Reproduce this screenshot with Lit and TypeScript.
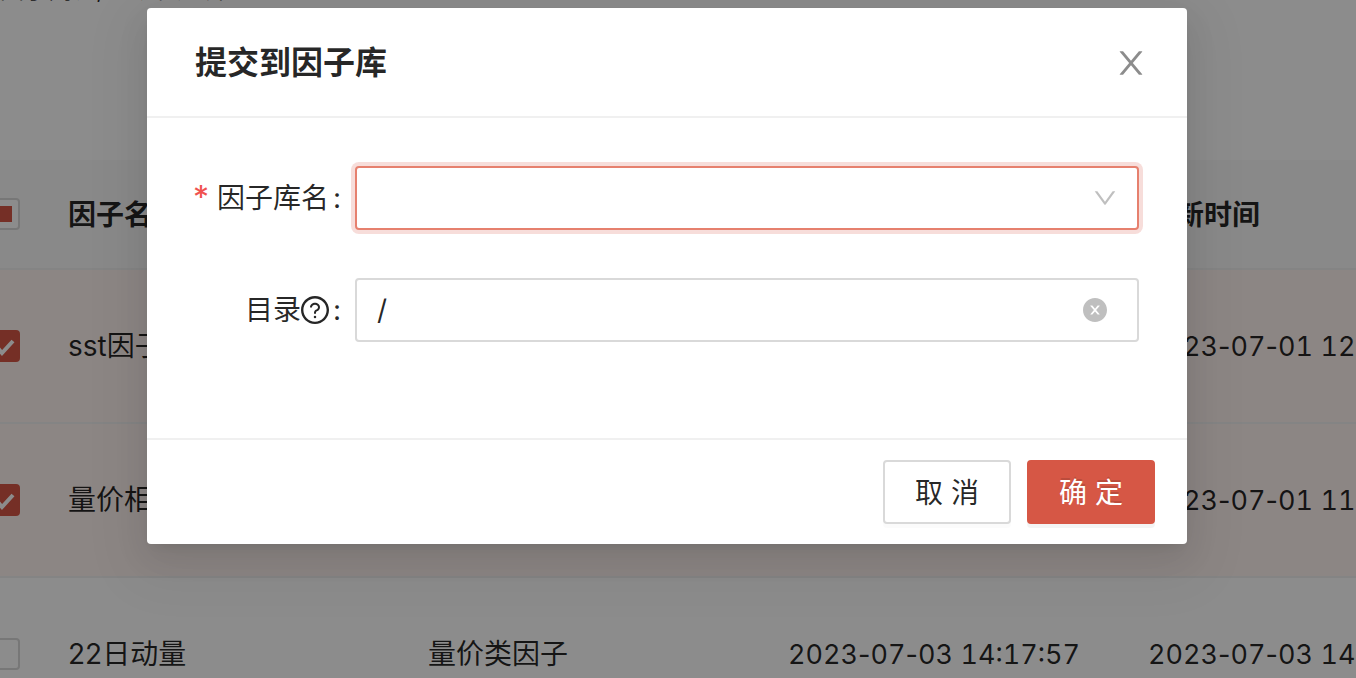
import { LitElement, html, css, svg } from "lit";
import { customElement, state } from "lit/decorators.js";

interface Row {
  name: string;
  type: string;
  created: string;
  updated: string;
  checked: boolean;
}

const ROWS: Row[] = [
  { name: "sst因子", type: "量价类因子", created: "2023-07-01 12:20:41", updated: "2023-07-01 12:20:41", checked: true },
  { name: "量价相关性", type: "量价类因子", created: "2023-07-01 11:42:16", updated: "2023-07-01 11:42:16", checked: true },
  { name: "22日动量", type: "量价类因子", created: "2023-07-03 14:17:57", updated: "2023-07-03 14:17:57", checked: false },
];

const closePath = svg`<path d="M563.8 512l262.5-312.9c4.4-5.2.7-13.1-6.1-13.1h-79.8c-4.7 0-9.2 2.1-12.3 5.7L511.6 449.8 295.1 191.7c-3-3.6-7.5-5.7-12.3-5.7H203c-6.8 0-10.5 7.9-6.1 13.1L459.4 512 196.9 824.9A7.95 7.95 0 00203 838h79.8c4.7 0 9.2-2.1 12.3-5.7l216.5-258.1 216.5 258.1c3 3.6 7.5 5.7 12.3 5.7h79.8c6.8 0 10.5-7.9 6.1-13.1L563.8 512z"></path>`;
const downPath = svg`<path d="M884 256h-75c-5.1 0-9.9 2.5-12.9 6.6L512 654.2 227.9 262.6c-3-4.1-7.8-6.6-12.9-6.6h-75c-6.5 0-10.3 7.4-6.5 12.7l352.6 486.1c12.8 17.6 39 17.6 51.7 0l352.6-486.1c3.9-5.3.1-12.7-6.4-12.7z"></path>`;
const questionPath = svg`<path d="M512 64C264.6 64 64 264.6 64 512s200.6 448 448 448 448-200.6 448-448S759.4 64 512 64zm0 820c-205.4 0-372-166.6-372-372s166.6-372 372-372 372 166.6 372 372-166.600 372-372 372z"></path><path d="M623.6 316.7C593.600 290.400 554 276 512 276s-81.600 14.500-111.600 40.700C369.200 344 352 380.700 352 420v7.600c0 4.400 3.600 8 8 8h48c4.400 0 8-3.600 8-8V420c0-44.100 43.100-80 96-80s96 35.900 96 80c0 31.100-22 59.600-56.100 72.700-21.200 8.100-39.200 22.300-52.100 40.900-13.100 19-19.900 41.800-19.900 64.900V620c0 4.400 3.600 8 8 8h48c4.400 0 8-3.600 8-8v-22.700a48.300 48.300 0 0130.900-44.800c59-22.700 97.100-74.700 97.100-132.500.1-39.300-17.100-76-48.300-103.300zM472 732a40 40 0 1080 0 40 40 0 10-80 0z"></path>`;
const clearPath = svg`<path d="M512 64C264.600 64 64 264.600 64 512s200.600 448 448 448 448-200.600 448-448S759.400 64 512 64zm165.400 618.200l-66-.3L512 563.400l-99.300 118.400-66.100.3c-4.400 0-8-3.500-8-8 0-1.900.7-3.700 1.900-5.200l130.100-155L340.500 359a8.320 8.320 0 01-1.900-5.200c0-4.400 3.600-8 8-8l66.100.3L512 464.600l99.300-118.400 66-.3c4.400 0 8 3.500 8 8 0 1.900-.7 3.700-1.900 5.200L553.500 514l130 155c1.200 1.500 1.900 3.300 1.900 5.200 0 4.400-3.600 8-8 8z"></path>`;

const icon = (paths: unknown, cls: string) =>
  html`<svg class="icon ${cls}" viewBox="64 64 896 896" aria-hidden="true">${paths}</svg>`;

// Tabular figures for the digit runs; hyphens and spaces keep their own widths.
const timestamp = (value: string) =>
  html`<time>${value.split(/([- ])/).map((part) => (/\d/.test(part) ? html`<span class="num">${part}</span>` : part))}</time>`;

const baseStyles = css`
  * {
    box-sizing: border-box;
  }
  .icon {
    display: block;
    fill: currentColor;
    flex: none;
  }
`;

@customElement("factor-table")
export class FactorTable extends LitElement {
  static styles = [
    baseStyles,
    css`
      :host {
        display: block;
      }
      .intro {
        margin: 0;
        height: 160px;
        overflow: hidden;
        display: flex;
        font-size: 24px;
      }
      .intro span {
        margin-top: -32px;
        white-space: nowrap;
      }
      table {
        width: 1504px;
        margin-left: -28px;
        table-layout: fixed;
        border-collapse: separate;
        border-spacing: 0;
      }
      .pick-col {
        width: 64px;
      }
      th,
      td {
        text-align: left;
        white-space: nowrap;
        border-bottom: 2px solid #f0f0f0;
      }
      th {
        font-weight: 600;
        padding: 33px 32px 31px;
        background: #fafafa;
      }
      td {
        height: 154px;
        padding: 0 32px;
      }
      .selected td {
        background: #fff4f0;
      }
      th.pick,
      td.pick {
        padding: 0 16px;
      }
      time {
        font-size: 27px;
      }
      .num {
        font-feature-settings: "tnum";
      }
      input {
        appearance: none;
        display: block;
        width: 32px;
        height: 32px;
        margin: 0;
        border: 2px solid #d9d9d9;
        border-radius: 4px;
        background: #fff center / 28px 28px no-repeat;
      }
      input:checked {
        border-color: #d65745;
        background-color: #d65745;
        background-image: url("data:image/svg+xml,%3Csvg xmlns='http://www.w3.org/2000/svg' viewBox='0 0 28 28'%3E%3Cpath d='M6 14l6 7L23 9' fill='none' stroke='white' stroke-width='4'/%3E%3C/svg%3E");
      }
      input:indeterminate {
        background-image: linear-gradient(#d65745, #d65745);
        background-size: 16px 16px;
      }
    `,
  ];

  render() {
    return html`
      <p class="intro"><span>因子列表, 可提交到库</span></p>
      <table>
        <colgroup>
          <col class="pick-col" />
          <col /><col /><col /><col />
        </colgroup>
        <thead>
          <tr>
            <th class="pick"><input type="checkbox" aria-label="全选" .indeterminate=${true} /></th>
            <th>因子名称</th>
            <th>因子类型</th>
            <th>创建时间</th>
            <th>更新时间</th>
          </tr>
        </thead>
        <tbody>
          ${ROWS.map(
            (r) => html`<tr class=${r.checked ? "selected" : ""}>
              <td class="pick"><input type="checkbox" aria-label=${r.name} .checked=${r.checked} /></td>
              <td>${r.name}</td>
              <td>${r.type}</td>
              <td>${timestamp(r.created)}</td>
              <td>${timestamp(r.updated)}</td>
            </tr>`
          )}
        </tbody>
      </table>
    `;
  }
}

@customElement("submit-dialog")
export class SubmitDialog extends LitElement {
  @state() private directory = "/";

  static styles = [
    baseStyles,
    css`
      :host {
        display: block;
        width: 100%;
        max-width: 1040px;
      }
      .dialog {
        background: #fff;
        border-radius: 4px;
        box-shadow: 0 6px 12px -8px rgba(0, 0, 0, 0.12), 0 12px 32px rgba(0, 0, 0, 0.08),
          0 18px 56px 16px rgba(0, 0, 0, 0.05);
      }
      header {
        display: flex;
        align-items: center;
        justify-content: space-between;
        padding: 33px 40px 31px 48px;
        border-bottom: 2px solid #f0f0f0;
      }
      h2 {
        margin: 0;
        font-size: 32px;
        line-height: 44px;
        font-weight: 600;
      }
      button {
        font: inherit;
        color: inherit;
        cursor: pointer;
      }
      .close,
      .clear {
        border: 0;
        padding: 0;
        background: none;
      }
      .close {
        color: rgba(0, 0, 0, 0.45);
      }
      .close .icon {
        width: 32px;
        height: 32px;
      }
      form {
        display: grid;
        gap: 48px;
        padding: 48px 48px 96px;
      }
      .field {
        display: grid;
        grid-template-columns: 160px 1fr;
        align-items: center;
      }
      label {
        display: flex;
        align-items: center;
        justify-content: flex-end;
        white-space: nowrap;
      }
      .required::before {
        content: "*";
        color: #f0524f;
        margin-right: 8px;
        font-size: 32px;
      }
      .colon {
        margin: 0 14px 0 4px;
      }
      .help {
        width: 28px;
        height: 28px;
      }
      .control {
        position: relative;
      }
      select,
      input {
        appearance: none;
        display: block;
        width: 100%;
        height: 64px;
        padding: 0 64px 0 20px;
        border: 2px solid #d9d9d9;
        border-radius: 4px;
        background: #fff;
        font: inherit;
        color: inherit;
        outline: 0;
      }
      select {
        border-color: #e6806e;
        box-shadow: 0 0 0 4px rgba(214, 87, 69, 0.2);
      }
      .arrow,
      .clear {
        position: absolute;
        top: 0;
        bottom: 0;
        margin: auto 0;
        color: rgba(0, 0, 0, 0.25);
      }
      .arrow {
        right: 22px;
        width: 24px;
        height: 24px;
        pointer-events: none;
      }
      .clear {
        right: 32px;
        height: 24px;
      }
      .clear .icon {
        width: 24px;
        height: 24px;
      }
      footer {
        display: flex;
        justify-content: flex-end;
        gap: 16px;
        padding: 20px 32px;
        border-top: 2px solid #f0f0f0;
      }
      .action {
        min-width: 128px;
        height: 64px;
        padding: 2px 28px 0;
        border: 2px solid #d9d9d9;
        border-radius: 4px;
        background: #fff;
        box-shadow: 0 4px 0 rgba(0, 0, 0, 0.016);
        line-height: 44px;
      }
      .primary {
        border-color: #d65745;
        background: #d65745;
        color: #fff;
        text-shadow: 0 -2px 0 rgba(0, 0, 0, 0.12);
        box-shadow: 0 4px 0 rgba(0, 0, 0, 0.043);
      }
    `,
  ];

  render() {
    return html`
      <section class="dialog" role="dialog" aria-modal="true" aria-labelledby="title">
        <header>
          <h2 id="title">提交到因子库</h2>
          <button class="close" type="button" aria-label="关闭">${icon(closePath, "")}</button>
        </header>
        <form @submit=${(e: Event) => e.preventDefault()}>
          <div class="field">
            <label class="required" for="library">因子库名<span class="colon">:</span></label>
            <div class="control">
              <select id="library" required><option value=""></option></select>
              ${icon(downPath, "arrow")}
            </div>
          </div>
          <div class="field">
            <label for="directory">目录${icon(questionPath, "help")}<span class="colon">:</span></label>
            <div class="control">
              <input
                id="directory"
                type="text"
                .value=${this.directory}
                @input=${(e: Event) => (this.directory = (e.target as HTMLInputElement).value)}
              />
              <button class="clear" type="button" aria-label="清除" @click=${() => (this.directory = "")}>
                ${icon(clearPath, "")}
              </button>
            </div>
          </div>
        </form>
        <footer>
          <button class="action" type="button">取 消</button>
          <button class="action primary" type="button">确 定</button>
        </footer>
      </section>
    `;
  }
}

@customElement("app-root")
export class AppRoot extends LitElement {
  static styles = [
    baseStyles,
    css`
      :host {
        display: block;
        position: relative;
        height: 100vh;
        overflow: hidden;
        background: #fff;
        color: rgba(0, 0, 0, 0.85);
        font: 28px / 44px Inter, "Noto Sans CJK SC", sans-serif;
      }
      .mask {
        position: absolute;
        inset: 0;
        display: flex;
        justify-content: center;
        align-items: flex-start;
        padding: 8px 22px 8px 0;
        background: rgba(0, 0, 0, 0.45);
      }
    `,
  ];

  render() {
    return html`
      <factor-table></factor-table>
      <div class="mask"><submit-dialog></submit-dialog></div>
    `;
  }
}
